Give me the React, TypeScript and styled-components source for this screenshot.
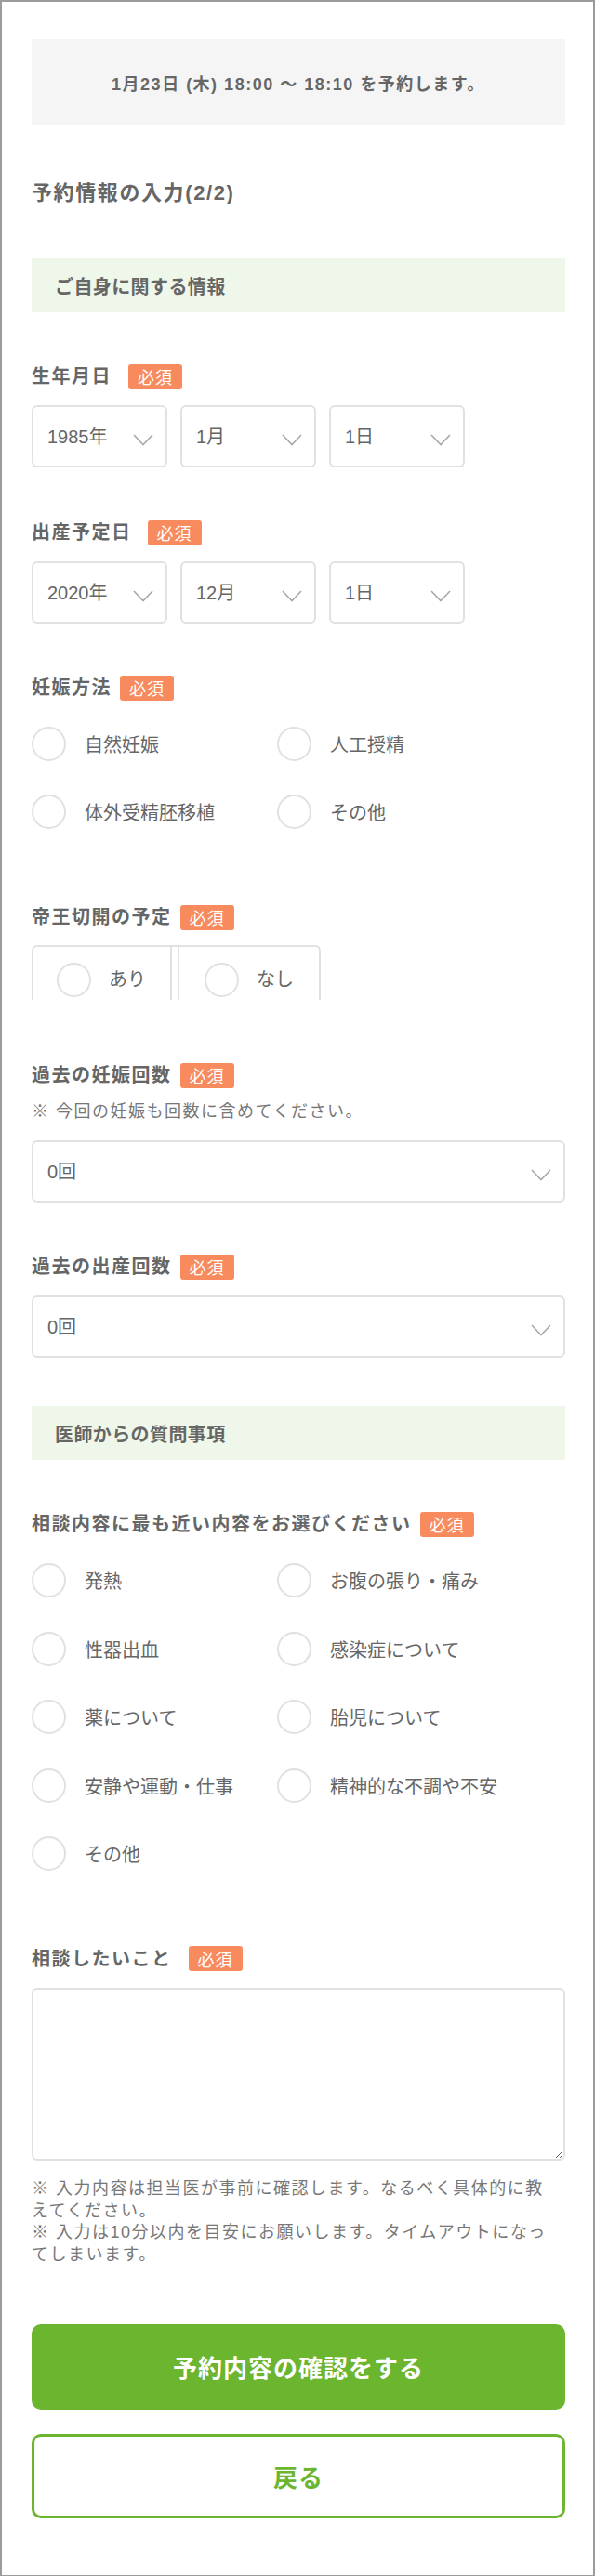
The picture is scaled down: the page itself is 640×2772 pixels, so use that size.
import React from "react";
import styled, { createGlobalStyle } from "styled-components";

const FONT = `"Liberation Sans", "Noto Sans CJK JP", sans-serif`;
const GREEN = "#6bb52f";
const BORDER = "#e1e1e1";

const GlobalStyle = createGlobalStyle`
  html, body { margin: 0; padding: 0; background: #fff; }
  body { font-family: ${FONT}; color: #666; }
`;

const Page = styled.div`
  box-sizing: border-box;
  width: 640px;
  min-height: 2772px;
  border: 2px solid #9b9b9b;
  padding: 40px 30px 61px 32px;
  display: flex;
  flex-direction: column;
`;

const Banner = styled.div`
  height: 93px;
  background: #f5f5f5;
  display: flex;
  align-items: center;
  justify-content: center;
  font-size: 18px;
  font-weight: 700;
  letter-spacing: 1.5px;
  color: #666;
`;

const Heading = styled.h1`
  margin: 56px 0 0;
  font-size: 22px;
  line-height: 34px;
  font-weight: 700;
  letter-spacing: 1.6px;
  color: #666;
`;

const SectionHeader = styled.h2<{ $top: number }>`
  margin: ${(p) => p.$top}px 0 0;
  height: 58px;
  background: #eef7e9;
  padding-left: 25px;
  display: flex;
  align-items: center;
  font-size: 20px;
  font-weight: 700;
  letter-spacing: 0.4px;
  color: #666;
`;

const Field = styled.div<{ $top: number }>`
  margin-top: ${(p) => p.$top}px;
  display: flex;
  flex-direction: column;
`;

const LabelRow = styled.div<{ $gap: number }>`
  display: flex;
  align-items: center;
  gap: ${(p) => p.$gap}px;
  height: 28px;
`;

const Label = styled.span`
  font-size: 20px;
  line-height: 28px;
  font-weight: 700;
  letter-spacing: 1.5px;
  color: #666;
`;

const Badge = styled.span`
  display: inline-flex;
  align-items: center;
  justify-content: center;
  height: 27px;
  padding: 0 10px;
  background: #f88b5e;
  color: #fff;
  font-size: 18px;
  letter-spacing: 1px;
  border-radius: 3px;
`;

const Hint = styled.p`
  margin: 13px 0 0;
  font-size: 18px;
  line-height: 24px;
  letter-spacing: 1.5px;
  color: #777;
`;

const DateRow = styled.div`
  display: flex;
  gap: 14px;
  margin-top: 17px;
`;

const SelectBox = styled.div<{ $width?: number; $top?: number }>`
  box-sizing: border-box;
  width: ${(p) => (p.$width ? `${p.$width}px` : "100%")};
  height: 67px;
  margin-top: ${(p) => p.$top ?? 0}px;
  border: 2px solid ${BORDER};
  border-radius: 6px;
  display: flex;
  align-items: center;
  padding: 0 13px 0 15px;
  font-size: 20px;
  color: #666;
`;

const SelectValue = styled.span`
  flex: 1;
  line-height: 28px;
`;

const ChevronIcon = styled.svg`
  flex-shrink: 0;
  margin-top: 8px;
`;

const RadioGrid = styled.div`
  display: grid;
  grid-template-columns: 264px 1fr;
  row-gap: 36.4px;
  margin-top: 28px;
`;

const RadioItem = styled.label`
  display: flex;
  align-items: center;
  gap: 20px;
  height: 37px;
  font-size: 20px;
  color: #666;
  white-space: nowrap;
`;

const Circle = styled.span`
  box-sizing: border-box;
  flex-shrink: 0;
  width: 37px;
  height: 37px;
  border: 2px solid ${BORDER};
  border-radius: 50%;
  background: #fff;
`;

const SegmentBox = styled.div`
  box-sizing: border-box;
  margin-top: 16px;
  width: 311px;
  height: 59px;
  overflow: hidden;
  display: flex;
  align-items: flex-start;
  border: 2px solid ${BORDER};
  border-bottom: none;
  border-radius: 6px 6px 0 0;
`;

const Segment = styled.label<{ $first?: boolean }>`
  box-sizing: border-box;
  display: flex;
  align-items: flex-start;
  gap: 19px;
  height: 97px;
  padding: 17px 0 0 ${(p) => (p.$first ? 25 : 27)}px;
  font-size: 20px;
  color: #666;
  flex: ${(p) => (p.$first ? "0 0 149px" : "1")};
  border-${(p) => (p.$first ? "right" : "left")}: 2px solid ${BORDER};
  margin-left: ${(p) => (p.$first ? 0 : 6)}px;
`;

const SegmentText = styled.span`
  line-height: 37px;
`;

const TextArea = styled.textarea`
  display: block;
  box-sizing: border-box;
  width: 100%;
  height: 186px;
  margin-top: 17px;
  border: 2px solid ${BORDER};
  border-radius: 6px;
  resize: vertical;
  font-family: ${FONT};
  font-size: 18px;
  color: #666;
  padding: 10px 14px;
  outline: none;
`;

const Notes = styled.div`
  margin-top: 19px;
  font-size: 18px;
  line-height: 23.7px;
  letter-spacing: 1.5px;
  color: #777;
`;

const NoteLine = styled.span`
  display: block;
  white-space: nowrap;
`;

const Button = styled.button<{ $variant: "primary" | "back"; $top: number }>`
  display: flex;
  align-items: center;
  justify-content: center;
  box-sizing: border-box;
  width: 100%;
  margin-top: ${(p) => p.$top}px;
  height: ${(p) => (p.$variant === "primary" ? 92 : 91)}px;
  border-radius: 10px;
  font-family: ${FONT};
  font-size: 26px;
  font-weight: 700;
  letter-spacing: 1px;
  cursor: pointer;
  background: ${(p) => (p.$variant === "primary" ? GREEN : "#fff")};
  color: ${(p) => (p.$variant === "primary" ? "#fff" : GREEN)};
  border: ${(p) => (p.$variant === "primary" ? "none" : `3px solid ${GREEN}`)};
`;

const Chevron = () => (
  <ChevronIcon width="22" height="13" viewBox="0 0 22 13" fill="none">
    <path d="M1 1 L11 11.5 L21 1" stroke="#a8a8a8" strokeWidth="1.6" />
  </ChevronIcon>
);

const Select = ({ value, width, top }: { value: string; width?: number; top?: number }) => (
  <SelectBox $width={width} $top={top}>
    <SelectValue>{value}</SelectValue>
    <Chevron />
  </SelectBox>
);

const FieldLabel = ({ text, gap = 9 }: { text: string; gap?: number }) => (
  <LabelRow $gap={gap}>
    <Label>{text}</Label>
    <Badge>必須</Badge>
  </LabelRow>
);

const Radios = ({ items }: { items: string[] }) => (
  <RadioGrid>
    {items.map((t) => (
      <RadioItem key={t}>
        <Circle />
        {t}
      </RadioItem>
    ))}
  </RadioGrid>
);

export default function App() {
  return (
    <>
      <GlobalStyle />
      <Page>
        <Banner>1月23日 (木) 18:00 〜 18:10 を予約します。</Banner>
        <Heading>予約情報の入力(2/2)</Heading>

        <SectionHeader $top={53}>ご自身に関する情報</SectionHeader>

        <Field $top={55}>
          <FieldLabel text="生年月日" gap={18} />
          <DateRow>
            <Select value="1985年" width={146} />
            <Select value="1月" width={146} />
            <Select value="1日" width={146} />
          </DateRow>
        </Field>

        <Field $top={56}>
          <FieldLabel text="出産予定日" gap={17} />
          <DateRow>
            <Select value="2020年" width={146} />
            <Select value="12月" width={146} />
            <Select value="1日" width={146} />
          </DateRow>
        </Field>

        <Field $top={55}>
          <FieldLabel text="妊娠方法" />
          <Radios items={["自然妊娠", "人工授精", "体外受精胚移植", "その他"]} />
        </Field>

        <Field $top={81}>
          <FieldLabel text="帝王切開の予定" />
          <SegmentBox>
            <Segment $first>
              <Circle />
              <SegmentText>あり</SegmentText>
            </Segment>
            <Segment>
              <Circle />
              <SegmentText>なし</SegmentText>
            </Segment>
          </SegmentBox>
        </Field>

        <Field $top={67}>
          <FieldLabel text="過去の妊娠回数" />
          <Hint>※ 今回の妊娠も回数に含めてください。</Hint>
          <Select value="0回" top={19} />
        </Field>

        <Field $top={55}>
          <FieldLabel text="過去の出産回数" />
          <Select value="0回" top={17} />
        </Field>

        <SectionHeader $top={52}>医師からの質問事項</SectionHeader>

        <Field $top={55}>
          <FieldLabel text="相談内容に最も近い内容をお選びください" />
          <Radios
            items={[
              "発熱",
              "お腹の張り・痛み",
              "性器出血",
              "感染症について",
              "薬について",
              "胎児について",
              "安静や運動・仕事",
              "精神的な不調や不安",
              "その他",
            ]}
          />
        </Field>

        <Field $top={81}>
          <FieldLabel text="相談したいこと" gap={18} />
          <TextArea />
        </Field>

        <Notes>
          <NoteLine>※ 入力内容は担当医が事前に確認します。なるべく具体的に教</NoteLine>
          <NoteLine>えてください。</NoteLine>
          <NoteLine>※ 入力は10分以内を目安にお願いします。タイムアウトになっ</NoteLine>
          <NoteLine>てしまいます。</NoteLine>
        </Notes>

        <Button $variant="primary" $top={62}>予約内容の確認をする</Button>
        <Button $variant="back" $top={26}>戻る</Button>
      </Page>
    </>
  );
}
